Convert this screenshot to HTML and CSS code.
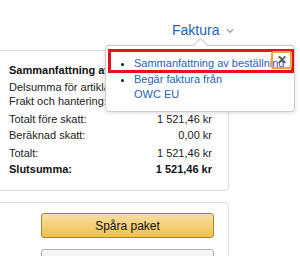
FILE: index.html
```html
<!DOCTYPE html>
<html lang="sv">
  <head>
    <meta charset="UTF-8" />
    <title>Faktura</title>
    <link rel="stylesheet" href="styles.css">
  </head>
  <body>
    <div class="page">
      <div class="topbar">
        <span class="faktura">Faktura</span>
        <svg class="chevron" width="8" height="6" viewBox="0 0 8 6">
          <path d="M1 1.5 L4 4.5 L7 1.5" fill="none" stroke="#999" stroke-width="1.2" />
        </svg>
      </div>

      <!-- Sammanfattning -->
      <div class="card summary">
        <div class="title">Sammanfattning av beställning</div>
        <div class="row"><span>Delsumma för artiklar:</span><span>1 521,46 kr</span></div>
        <div class="row"><span>Frakt och hantering:</span><span>0,00 kr</span></div>
        <div class="row gap"><span>Totalt före skatt:</span><span>1 521,46 kr</span></div>
        <div class="row"><span>Beräknad skatt:</span><span>0,00 kr</span></div>
        <div class="row gap"><span>Totalt:</span><span>1 521,46 kr</span></div>
        <div class="row total"><span>Slutsumma:</span><span>1 521,46 kr</span></div>
      </div>

      <div class="card actions">
        <button class="btn primary">Spåra paket</button>
        <button class="btn secondary" aria-label="Returnera"></button>
      </div>

      <!-- Popover -->
      <div class="popover">
        <div class="arrow"></div>
        <ul>
          <li><a href="#">Sammanfattning av beställning</a></li>
          <li><a href="#">Begär faktura från<br>OWC EU</a></li>
        </ul>
        <div class="highlight"></div>
        <button class="close">&#x2715;</button>
      </div>
    </div>
  </body>
</html>
```

FILE: styles.css
```css
body {
  margin: 0;
  font-family: "Liberation Sans", Arial, sans-serif;
  font-size: 11px;
  color: #111;
  background: #fff;
  overflow: hidden;
}

.page {
  position: relative;
  width: 300px;
  height: 256px;
  overflow: hidden;
}

.topbar {
  height: 50px;
  display: flex;
  align-items: center;
  padding-left: 172px;
  gap: 7px;
  box-sizing: border-box;
  padding-top: 9px;
}

.faktura {
  color: #1f63b5;
  font-size: 14px;
}

.chevron {
  margin-top: 2px;
}

/* kort */
.card {
  width: 233px;
  margin-left: -4px;
  border: 1px solid #ddd;
  border-radius: 4px;
  box-sizing: border-box;
  background: #fff;
}

.summary {
  height: 141px;
  padding: 11px 16px 0 12px;
}

.title {
  font-weight: bold;
  white-space: nowrap;
  overflow: hidden;
  line-height: 16px;
  margin-bottom: 2px;
}

.row {
  display: flex;
  justify-content: space-between;
  line-height: 14px;
  color: #222;
}

.row.gap {
  margin-top: 4px;
}

.row.gap + .row {
  margin-top: 2px;
}

.row span:first-child {
  white-space: nowrap;
  overflow: hidden;
}

.row.total {
  font-weight: bold;
  color: #111;
  margin-top: 4px;
}

.actions {
  margin-top: 11px;
  height: 80px;
  padding: 10px 16px 0 44px;
  display: flex;
  flex-direction: column;
  gap: 11px;
}

.btn {
  width: 173px;
  height: 25px;
  flex-shrink: 0;
  border-radius: 3px;
  font-family: inherit;
  font-size: 12px;
  color: #111;
  padding: 0;
}

.btn.primary {
  background: linear-gradient(to bottom, #f7dfa5, #f0c14b);
  border: 1px solid #a88734;
}

.btn.secondary {
  background: linear-gradient(to bottom, #f7f8fa, #e7e9ec);
  border: 1px solid #adb1b8;
}

/* popover */
.popover {
  position: absolute;
  left: 105px;
  top: 45px;
  width: 190px;
  height: 67px;
  box-sizing: border-box;
  background: #fff;
  border: 1px solid #ccc;
  border-radius: 4px;
  box-shadow: 0 1px 4px rgba(0, 0, 0, 0.15);
}

.arrow {
  position: absolute;
  left: 89px;
  top: -6px;
  width: 10px;
  height: 10px;
  background: #fff;
  border-left: 1px solid #ccc;
  border-top: 1px solid #ccc;
  transform: rotate(45deg);
}

.popover ul {
  margin: 0;
  padding: 10px 0 0 28px;
  line-height: 15px;
}

.popover li {
  margin-bottom: 1px;
}

.popover a {
  color: #1f63b5;
  text-decoration: none;
}

.highlight {
  position: absolute;
  left: 2px;
  top: 3px;
  width: 186px;
  height: 24px;
  border: 3px solid #e3131f;
  box-sizing: border-box;
}

.close {
  position: absolute;
  left: 165px;
  top: 5px;
  width: 21px;
  height: 18px;
  padding: 0;
  background: transparent;
  border: 2px solid #f0a23b;
  border-radius: 2px;
  font-size: 12px;
  line-height: 12px;
  color: #555;
  font-weight: bold;
}
```
